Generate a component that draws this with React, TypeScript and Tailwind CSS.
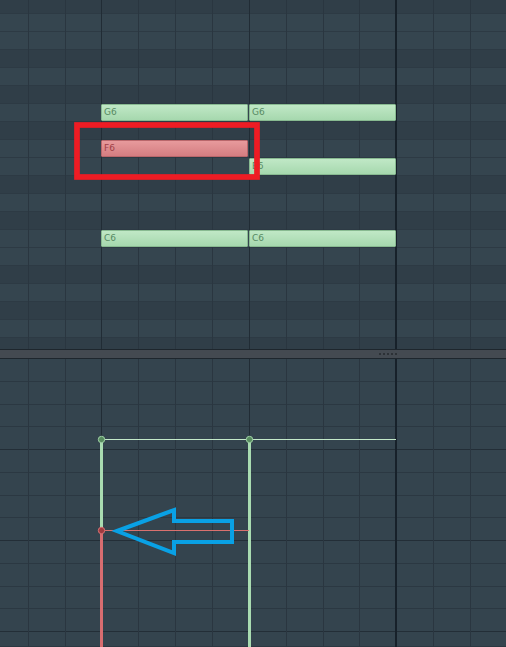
import React from 'react';

// piano rows from C#7 down, true = black key (darker stripe)
const keyRows: boolean[] = [
  true, false, false, true, false, true, false, true, false, false,
  true, false, true, false, false, true, false, true, false, true,
];

// vertical grid lines: x position and kind
const lines: { x: number; kind: 'beat' | 'bar' | 'big' }[] = [
  { x: 28, kind: 'beat' },
  { x: 65, kind: 'beat' },
  { x: 101, kind: 'bar' },
  { x: 138, kind: 'beat' },
  { x: 175, kind: 'beat' },
  { x: 212, kind: 'beat' },
  { x: 249, kind: 'bar' },
  { x: 286, kind: 'beat' },
  { x: 323, kind: 'beat' },
  { x: 359, kind: 'beat' },
  { x: 395, kind: 'big' },
  { x: 433, kind: 'beat' },
  { x: 470, kind: 'beat' },
];

const lineClass = {
  beat: 'border-l border-[#2a3640]',
  bar: 'border-l border-[#212c35]',
  big: 'border-l-2 border-[#17212a]',
};

// bottom pane row heights (line drawn at bottom of each)
const eventRows = [23, 23, 22, 23, 23, 23, 22, 23, 23, 23, 22, 23, 15];

type Note = { label: string; x: number; y: number; w: number; red?: boolean };

const notes: Note[] = [
  { label: 'G6', x: 101, y: 104, w: 147 },
  { label: 'G6', x: 249, y: 104, w: 147 },
  { label: 'F6', x: 101, y: 140, w: 147, red: true },
  { label: 'E6', x: 249, y: 158, w: 147 },
  { label: 'C6', x: 101, y: 230, w: 147 },
  { label: 'C6', x: 249, y: 230, w: 147 },
];

const GridLines: React.FC = () => (
  <div className="pointer-events-none absolute inset-0 flex">
    <div className="w-[28px] shrink-0" />
    {lines.map((l, i) => {
      const next = i + 1 < lines.length ? lines[i + 1].x : 506;
      return (
        <div
          key={l.x}
          className={`h-full shrink-0 ${lineClass[l.kind]}`}
          style={{ width: next - l.x }}
        />
      );
    })}
  </div>
);

const NoteBlock: React.FC<{ note: Note }> = ({ note }) => (
  <div
    className={`absolute flex h-[17px] items-center rounded-[1px] border pl-[2px] font-['DejaVu_Sans',Verdana,sans-serif] text-[9px] leading-none ${
      note.red
        ? 'border-[#b9676b] bg-gradient-to-b from-[#e79a9c] to-[#d47d81] text-[#a03f46]'
        : 'border-[#88ba91] bg-gradient-to-b from-[#c0e8c6] to-[#a6d8ae] text-[#578a63]'
    }`}
    style={{ left: note.x, top: note.y, width: note.w }}
  >
    {note.label}
  </div>
);

export default function App() {
  return (
    <div className="relative h-[647px] w-[506px] overflow-hidden bg-[#34444e]">
      {/* Piano roll */}
      <div className="relative h-[349px] overflow-hidden">
        <div className="mt-[-4px] flex flex-col">
          {keyRows.map((black, i) => (
            <div
              key={i}
              className={`h-[18px] border-b border-[#2d3a44] ${
                black ? 'bg-[#303e48]' : 'bg-[#35454f]'
              }`}
            />
          ))}
        </div>
        <GridLines />
        {notes.map((n, i) => (
          <NoteBlock key={i} note={n} />
        ))}
      </div>

      {/* Splitter */}
      <div className="flex h-[10px] items-center justify-end border-y border-[#1e262d] bg-[#444a51] pr-[109px]">
        <div className="flex gap-[2px]">
          {[0, 1, 2, 3, 4].map((d) => (
            <div key={d} className="h-[2px] w-[2px] bg-[#2c3136]" />
          ))}
        </div>
      </div>

      {/* Event editor */}
      <div className="relative h-[288px] overflow-hidden">
        <div className="flex flex-col">
          {eventRows.map((h, i) => (
            <div
              key={i}
              className={`shrink-0 border-b ${
                i % 4 === 3 ? 'border-[#232e37]' : 'border-[#2b3842]'
              }`}
              style={{ height: h }}
            />
          ))}
        </div>
        <GridLines />
        <svg
          className="absolute inset-0"
          width="506"
          height="288"
          viewBox="0 359 506 288"
        >
          <line x1="101" y1="439.5" x2="396" y2="439.5" stroke="#c3e9c9" strokeWidth="1" />
          <rect x="100" y="439" width="3" height="91" fill="#a9dcb1" />
          <rect x="248" y="439" width="3" height="208" fill="#a9dcb1" />
          <rect x="100" y="530" width="3" height="117" fill="#d86d70" />
          <line x1="101" y1="530.5" x2="249" y2="530.5" stroke="#d9716f" strokeWidth="1" />
          <circle cx="101.5" cy="439.5" r="3.2" fill="#578c5f" stroke="#9fd0a6" strokeWidth="1" />
          <circle cx="249.5" cy="439.5" r="3.2" fill="#578c5f" stroke="#9fd0a6" strokeWidth="1" />
          <circle cx="101.5" cy="530.5" r="3.2" fill="#9e3a3f" stroke="#d57274" strokeWidth="1" />
        </svg>
      </div>

      {/* Annotations */}
      <svg
        className="pointer-events-none absolute inset-0"
        width="506"
        height="647"
        viewBox="0 0 506 647"
      >
        <rect x="77" y="125" width="180" height="52" fill="none" stroke="#ee1c24" strokeWidth="5.7" />
        <polygon
          points="117,531 174,510 174,521 232,521 232,542 174,542 174,553"
          fill="none"
          stroke="#09a1e5"
          strokeWidth="4"
          strokeLinejoin="miter"
        />
      </svg>
    </div>
  );
}
